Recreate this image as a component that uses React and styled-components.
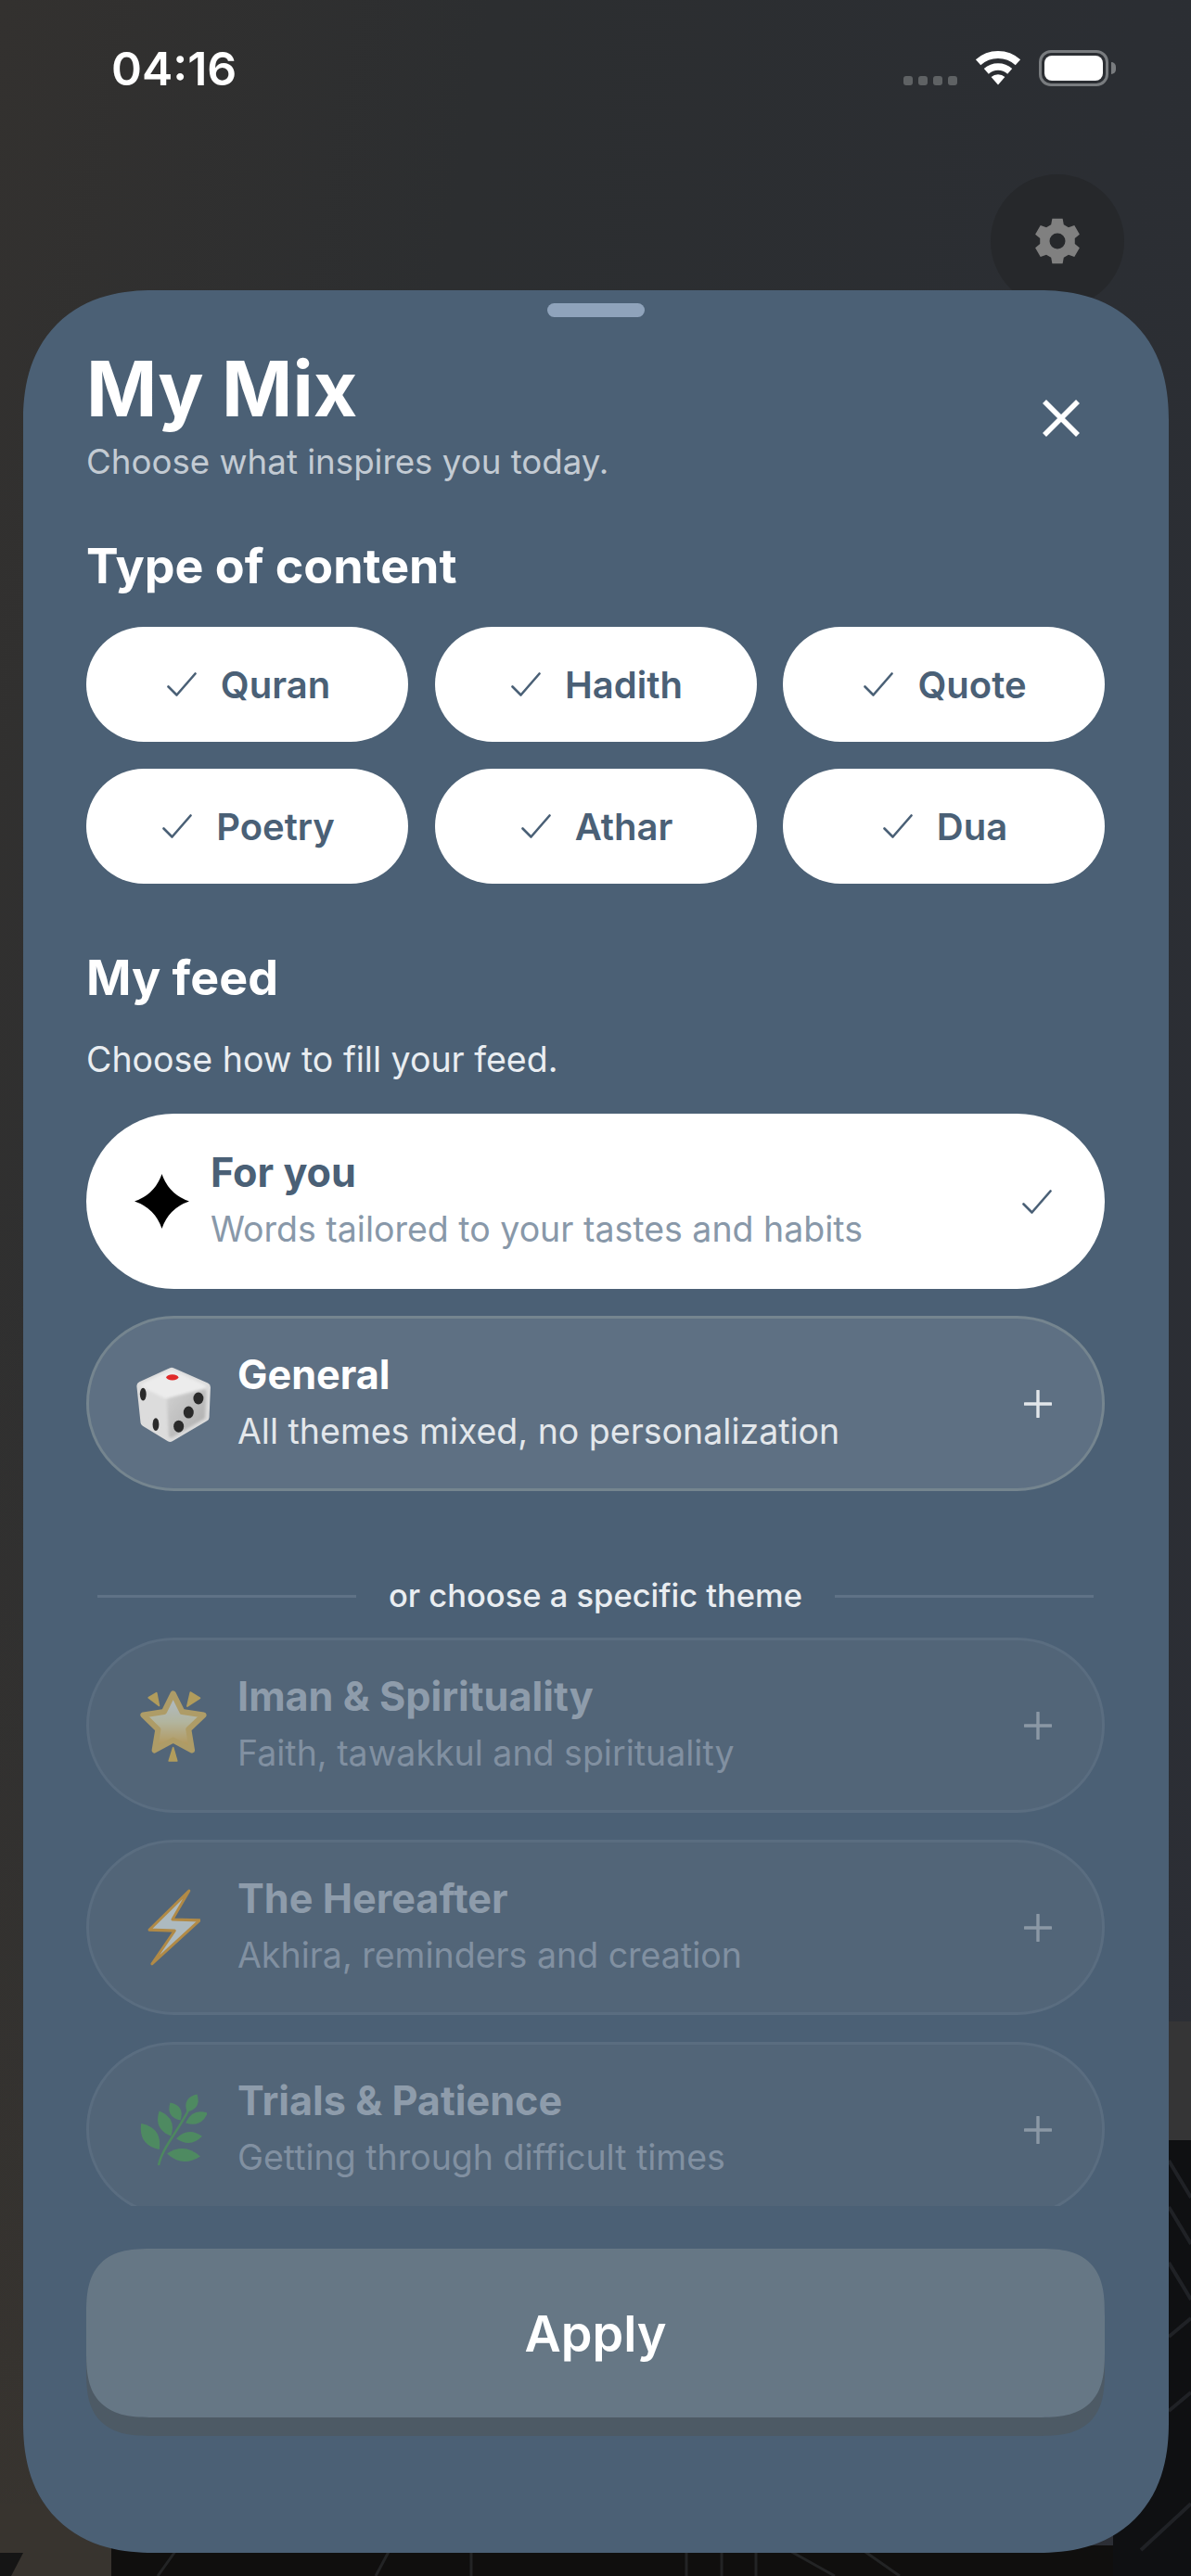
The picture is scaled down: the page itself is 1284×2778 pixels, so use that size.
import styled, { createGlobalStyle } from "styled-components";

const GlobalStyle = createGlobalStyle`
  html, body {
    margin: 0;
    padding: 0;
    background: #2b2d30;
  }
  * {
    box-sizing: border-box;
  }
`;

const Page = styled.div`
  position: relative;
  width: 1284px;
  height: 2778px;
  overflow: hidden;
  font-family: Inter, "Noto Sans", sans-serif;
  color: #fff;
  background: linear-gradient(100deg, #33312f 0%, #2c2e30 30%, #2b2e33 70%, #2c2e35 100%);
`;

const Backdrop = styled.svg`
  position: absolute;
  left: 0;
  top: 0;
`;

const StatusBar = styled.div`
  position: relative;
  height: 188px;
  padding: 45px 82px 0 120px;
  display: flex;
  justify-content: space-between;
  align-items: flex-start;
`;

const Clock = styled.div`
  font-size: 50px;
  line-height: 58px;
  font-weight: 600;
`;

const StatusIcons = styled.div`
  display: flex;
  align-items: flex-start;
  margin-top: 9px;
`;

const SignalDots = styled.div`
  display: flex;
  gap: 6px;
  margin: 28px 19px 0 0;
`;

const Dot = styled.span`
  width: 10px;
  height: 10px;
  border-radius: 3px;
  background: #5f6264;
`;

const Battery = styled.div`
  position: relative;
  width: 75px;
  height: 39px;
  margin: 0 7px 0 19px;
  padding: 3px;
  border: 3px solid #797c7f;
  border-radius: 13px;

  &::after {
    content: "";
    position: absolute;
    right: -11px;
    top: 10px;
    width: 5px;
    height: 13px;
    border-radius: 0 5px 5px 0;
    background: #797c7f;
  }
`;

const BatteryFill = styled.div`
  height: 100%;
  border-radius: 8px;
  background: #fff;
`;

const SettingsRow = styled.div`
  position: relative;
  height: 125px;
  display: flex;
  justify-content: flex-end;
  padding-right: 72px;
`;

const SettingsButton = styled.div`
  width: 144px;
  height: 144px;
  border-radius: 50%;
  background: #26282b;
  display: flex;
  align-items: center;
  justify-content: center;
`;

const Sheet = styled.div`
  position: relative;
  margin-left: 25px;
  width: 1235px;
  height: 2440px;
  padding: 14px 69px 146px 68px;
  display: flex;
  flex-direction: column;
  background: #4b6075;
  border-radius: 140px;
  corner-shape: superellipse(1.2);
`;

const Handle = styled.div`
  flex: none;
  width: 105px;
  height: 15px;
  margin: 0 auto;
  border-radius: 8px;
  background: #8fa3bb;
`;

const Header = styled.div`
  flex: none;
  display: flex;
  justify-content: space-between;
  align-items: center;
  margin-top: 33px;
`;

const Title = styled.h1`
  margin: 0;
  font-size: 82px;
  line-height: 90px;
  font-weight: 700;
`;

const Subtitle = styled.p`
  margin: 11px 0 0;
  font-size: 36.7px;
  line-height: 44px;
  color: #c3cbd3;
`;

const CloseButton = styled.div`
  display: flex;
  margin: 6px 27px 0 0;
`;

const Scroller = styled.div`
  flex: 1;
  min-height: 0;
  overflow: hidden;
`;

const SectionTitle = styled.h2`
  margin: ${(p) => p.$top}px 0 0;
  font-size: 52px;
  line-height: 62px;
  font-weight: 700;
`;

const ChipGrid = styled.div`
  display: grid;
  grid-template-columns: repeat(3, 1fr);
  gap: 29px 28.5px;
  margin-top: 34px;
`;

const Chip = styled.div`
  height: 124px;
  padding-left: 3px;
  border-radius: 62px;
  background: #fff;
  color: #4a6076;
  display: flex;
  align-items: center;
  justify-content: center;
  gap: 26px;
  font-size: 40px;
  font-weight: 600;
`;

const Hint = styled.p`
  margin: 35px 0 0;
  font-size: 37.5px;
  line-height: 44px;
  color: #e9edf1;
`;

const CardList = styled.div`
  display: flex;
  flex-direction: column;
  gap: 29px;
  margin-top: ${(p) => p.$top}px;
`;

const cardLook = {
  active: "background: #fff; border: 0 solid transparent;",
  normal: "background: #5e7083; border: 3px solid #75858f;",
  dim: "background: #526578; border: 3px solid #5a6d80;",
};

const Card = styled.div`
  flex: none;
  height: 189px;
  border-radius: 95px;
  ${(p) => cardLook[p.$look]}
  padding: 0 ${(p) => (p.$look === "active" ? 57 : 54)}px 0 ${(p) => (p.$look === "active" ? 52 : 49)}px;
  display: flex;
  align-items: center;
  gap: 23px;
`;

const IconSlot = styled.div`
  flex: none;
  width: ${(p) => p.$width}px;
  padding-right: ${(p) => (p.$look === "active" ? 0 : 4)}px;
  display: flex;
  justify-content: center;
  opacity: ${(p) => (p.$look === "dim" ? 0.6 : 1)};
`;

const CardText = styled.div`
  flex: 1;
  min-width: 0;
  padding-bottom: 5px;
`;

const titleColors = { active: "#4a6076", normal: "#fff", dim: "#8e9cab" };
const subColors = { active: "#8898a9", normal: "#e3e7eb", dim: "#8190a1" };

const CardTitle = styled.div`
  font-size: 43.2px;
  line-height: 52px;
  font-weight: 700;
  color: ${(p) => titleColors[p.$look]};
`;

const CardSub = styled.div`
  margin-top: 13px;
  font-size: 37.5px;
  line-height: 46px;
  color: ${(p) => subColors[p.$look]};
`;

const Trailing = styled.div`
  flex: none;
  display: flex;
  opacity: ${(p) => (p.$look === "dim" ? 0.4 : 1)};
`;

const Divider = styled.div`
  display: flex;
  align-items: center;
  justify-content: center;
  gap: 35px;
  margin: 91px 12px 0;
  font-size: 34.5px;
  line-height: 44px;
  font-weight: 500;
  color: #e9edf1;
  white-space: nowrap;
`;

const DividerLine = styled.div`
  flex: 1;
  height: 3px;
  background: #5f7286;
`;

const ApplyButton = styled.div`
  flex: none;
  height: 182px;
  margin-top: 46px;
  border-radius: 72px;
  corner-shape: superellipse(1.5);
  background: #667785;
  box-shadow: 0 20px 0 #4d5a65;
  display: flex;
  align-items: center;
  justify-content: center;
  font-size: 54px;
  font-weight: 600;
`;

const Check = ({ color = "#4a6076" }) => (
  <svg width="32" height="26" viewBox="0 0 32 26" fill="none">
    <path d="M1.5 15.5 L10.5 24.5 L30.5 1.5" stroke={color} strokeWidth="2.6" strokeLinecap="round" strokeLinejoin="round" />
  </svg>
);

const Plus = ({ color = "#e2e6ea" }) => (
  <svg width="30" height="30" viewBox="0 0 30 30" fill="none">
    <path d="M15 1 V29 M1 15 H29" stroke={color} strokeWidth="3.4" strokeLinecap="round" />
  </svg>
);

const Close = () => (
  <svg width="40" height="40" viewBox="0 0 40 40" fill="none">
    <path d="M2 2 L38 38 M38 2 L2 38" stroke="#fff" strokeWidth="5.6" />
  </svg>
);

const Wifi = () => (
  <svg width="50" height="38" viewBox="0 0 50 38" fill="none">
    <path d="M3.6 13.2 A32 32 0 0 1 46.4 13.2" stroke="#fff" strokeWidth="8" />
    <path d="M12.3 22.9 A19 19 0 0 1 37.7 22.9" stroke="#fff" strokeWidth="7.5" />
    <path d="M25 37.5 L17.6 29 A11 11 0 0 1 32.4 29 Z" fill="#fff" />
  </svg>
);

// six tooth gear, points worked out from the centre
const gearPath = () => {
  const pt = (r, deg) => {
    const a = ((deg - 90) * Math.PI) / 180;
    return `${(25 + r * Math.cos(a)).toFixed(2)} ${(25 + r * Math.sin(a)).toFixed(2)}`;
  };
  let d = "";
  for (let i = 0; i < 6; i++) {
    const a = i * 60;
    d += `${i === 0 ? "M" : "L"}${pt(19, a - 21)} L${pt(25, a - 13)} L${pt(25, a + 13)} L${pt(19, a + 21)} `;
  }
  return `${d}Z M25 16.5 A8.5 8.5 0 1 0 25 33.5 A8.5 8.5 0 1 0 25 16.5 Z`;
};

const Gear = () => (
  <svg width="50" height="50" viewBox="0 0 50 50">
    <path d={gearPath()} fill="#808080" fillRule="evenodd" />
  </svg>
);

const Sparkle = () => (
  <svg width="59" height="59" viewBox="0 0 59 59">
    <path d="M29.5 0 Q37 22 59 29.5 Q37 37 29.5 59 Q22 37 0 29.5 Q22 22 29.5 0 Z" fill="#000" />
  </svg>
);

const Dice = () => (
  <svg width="84" height="84" viewBox="33 38 245 245">
    <defs>
      <linearGradient id="diceRight" x1="0" y1="0" x2="1" y2="1">
        <stop offset="0" stopColor="#cfcfcf" />
        <stop offset="1" stopColor="#adadad" />
      </linearGradient>
      <filter id="diceSoft">
        <feGaussianBlur stdDeviation="4" />
      </filter>
    </defs>
    <path d="M150 60 L258 108 L254 202 L145 266 L66 218 L54 104 Z" fill="#dcdcdc" stroke="#dcdcdc" strokeWidth="28" strokeLinejoin="round" />
    <path d="M150 60 L250 106 L135 138 L60 102 Z" fill="#ececec" stroke="#ececec" strokeWidth="14" strokeLinejoin="round" filter="url(#diceSoft)" />
    <path d="M252 122 L248 202 L148 260 L142 150 Z" fill="url(#diceRight)" stroke="url(#diceRight)" strokeWidth="14" strokeLinejoin="round" filter="url(#diceSoft)" />
    <ellipse cx="152" cy="77" rx="19" ry="9" fill="#e02a2a" />
    <ellipse cx="60" cy="130" rx="10" ry="20" fill="#2a2a2a" />
    <ellipse cx="100" cy="225" rx="10" ry="20" fill="#2a2a2a" />
    <ellipse cx="234" cy="143" rx="16" ry="19" fill="#2a2a2a" />
    <ellipse cx="203" cy="187" rx="16" ry="19" fill="#2a2a2a" />
    <ellipse cx="172" cy="231" rx="16" ry="19" fill="#2a2a2a" />
  </svg>
);

const GlowStar = () => (
  <svg width="76" height="80" viewBox="42 62 224 236">
    <defs>
      <linearGradient id="starFill" x1="0" y1="0" x2="0" y2="1">
        <stop offset="0.1" stopColor="#eef4f4" />
        <stop offset="0.5" stopColor="#f2eab8" />
        <stop offset="1" stopColor="#f3b136" />
      </linearGradient>
    </defs>
    <path d="M153 78 L182 136 L250 146 L202 192 L213 258 L153 226 L94 258 L105 192 L58 146 L124 136 Z" fill="url(#starFill)" stroke="#ecc15c" strokeWidth="18" strokeLinejoin="round" />
    <path d="M75 91 L100 76 L108 116 Z M208 74 L238 92 L198 118 Z M153 250 L165 292 L140 292 Z" fill="#f0c24a" stroke="#f0c24a" strokeWidth="5" strokeLinejoin="round" />
  </svg>
);

const Bolt = () => (
  <svg width="57" height="85" viewBox="240 750 140 190" preserveAspectRatio="none">
    <path d="M350 757 L245 851 L312 853 L252 933 L378 828 L306 826 Z" fill="#eaf3f0" stroke="#f0a326" strokeWidth="7" strokeLinejoin="round" />
  </svg>
);

const leaves = [
  [56, 10, -60, 11, 6],
  [38, 19, 60, 11, 6],
  [27, 32, 65, 15, 7],
  [11, 46, 55, 17, 8],
  [61, 26, -25, 13, 6],
  [53, 47, -5, 14, 6],
  [47, 66, 5, 18, 7],
];

const Herb = () => (
  <svg width="72" height="78" viewBox="0 0 72 78">
    <path d="M20 77 C24 58 40 42 53 16" fill="none" stroke="#4aa050" strokeWidth="2.5" />
    {leaves.map(([x, y, angle, len, w]) => (
      <path
        key={`${x}-${y}`}
        d={`M${-len} 0 Q0 ${-w * 2} ${len} 0 Q0 ${w * 2} ${-len} 0 Z`}
        transform={`translate(${x} ${y}) rotate(${angle})`}
        fill="#4da353"
      />
    ))}
  </svg>
);

const chips = ["Quran", "Hadith", "Quote", "Poetry", "Athar", "Dua"];

const themes = [
  { title: "Iman & Spirituality", sub: "Faith, tawakkul and spirituality", icon: <GlowStar /> },
  { title: "The Hereafter", sub: "Akhira, reminders and creation", icon: <Bolt /> },
  { title: "Trials & Patience", sub: "Getting through difficult times", icon: <Herb /> },
];

const MixCard = ({ look, icon, width = 88, title, sub, trailing }) => (
  <Card $look={look}>
    <IconSlot $width={width} $look={look}>
      {icon}
    </IconSlot>
    <CardText>
      <CardTitle $look={look}>{title}</CardTitle>
      <CardSub $look={look}>{sub}</CardSub>
    </CardText>
    <Trailing $look={look}>{trailing}</Trailing>
  </Card>
);

const BackdropArt = () => (
  <Backdrop width="1284" height="2778" viewBox="0 0 1284 2778">
    <defs>
      <linearGradient id="leftWall" x1="0" y1="0" x2="0" y2="1">
        <stop offset="0" stopColor="#38342f" stopOpacity="0" />
        <stop offset="1" stopColor="#38342f" />
      </linearGradient>
    </defs>
    <rect x="0" y="1400" width="60" height="1378" fill="url(#leftWall)" />
    <rect x="0" y="2700" width="125" height="78" fill="#38342f" />
    <path d="M0 2753 L25 2753 L12 2778 L0 2778 Z" fill="#151515" />
    <rect x="120" y="2745" width="1164" height="33" fill="#100f0e" />
    <rect x="1200" y="2308" width="84" height="470" fill="#0f1012" />
    <rect x="1258" y="2180" width="26" height="128" fill="#353536" />
    <path d="M1260 2330 L1284 2370 M1260 2380 L1284 2420 M1260 2440 L1284 2480 M1260 2520 L1284 2500 M1260 2600 L1284 2580 M1230 2750 L1284 2700" stroke="#202226" strokeWidth="4" />
    <path d="M190 2750 L170 2778 M420 2750 L405 2778 M508 2750 V2778 M740 2750 V2778 M778 2750 V2778 M815 2750 V2778 M850 2750 L900 2778 M930 2750 L970 2778" stroke="#232425" strokeWidth="3" />
  </Backdrop>
);

const App = () => (
  <Page>
    <GlobalStyle />
    <BackdropArt />
    <StatusBar>
      <Clock>04:16</Clock>
      <StatusIcons>
        <SignalDots>
          <Dot />
          <Dot />
          <Dot />
          <Dot />
        </SignalDots>
        <Wifi />
        <Battery>
          <BatteryFill />
        </Battery>
      </StatusIcons>
    </StatusBar>
    <SettingsRow>
      <SettingsButton>
        <Gear />
      </SettingsButton>
    </SettingsRow>
    <Sheet>
      <Handle />
      <Header>
        <div>
          <Title>My Mix</Title>
          <Subtitle>Choose what inspires you today.</Subtitle>
        </div>
        <CloseButton>
          <Close />
        </CloseButton>
      </Header>
      <Scroller>
        <SectionTitle $top={60}>Type of content</SectionTitle>
        <ChipGrid>
          {chips.map((chip) => (
            <Chip key={chip}>
              <Check />
              {chip}
            </Chip>
          ))}
        </ChipGrid>
        <SectionTitle $top={71}>My feed</SectionTitle>
        <Hint>Choose how to fill your feed.</Hint>
        <CardList $top={36}>
          <MixCard
            look="active"
            icon={<Sparkle />}
            width={59}
            title="For you"
            sub="Words tailored to your tastes and habits"
            trailing={<Check />}
          />
          <MixCard
            look="normal"
            icon={<Dice />}
            title="General"
            sub="All themes mixed, no personalization"
            trailing={<Plus />}
          />
        </CardList>
        <Divider>
          <DividerLine />
          or choose a specific theme
          <DividerLine />
        </Divider>
        <CardList $top={23}>
          {themes.map((theme) => (
            <MixCard key={theme.title} look="dim" trailing={<Plus />} {...theme} />
          ))}
        </CardList>
      </Scroller>
      <ApplyButton>Apply</ApplyButton>
    </Sheet>
  </Page>
);

export default App;
